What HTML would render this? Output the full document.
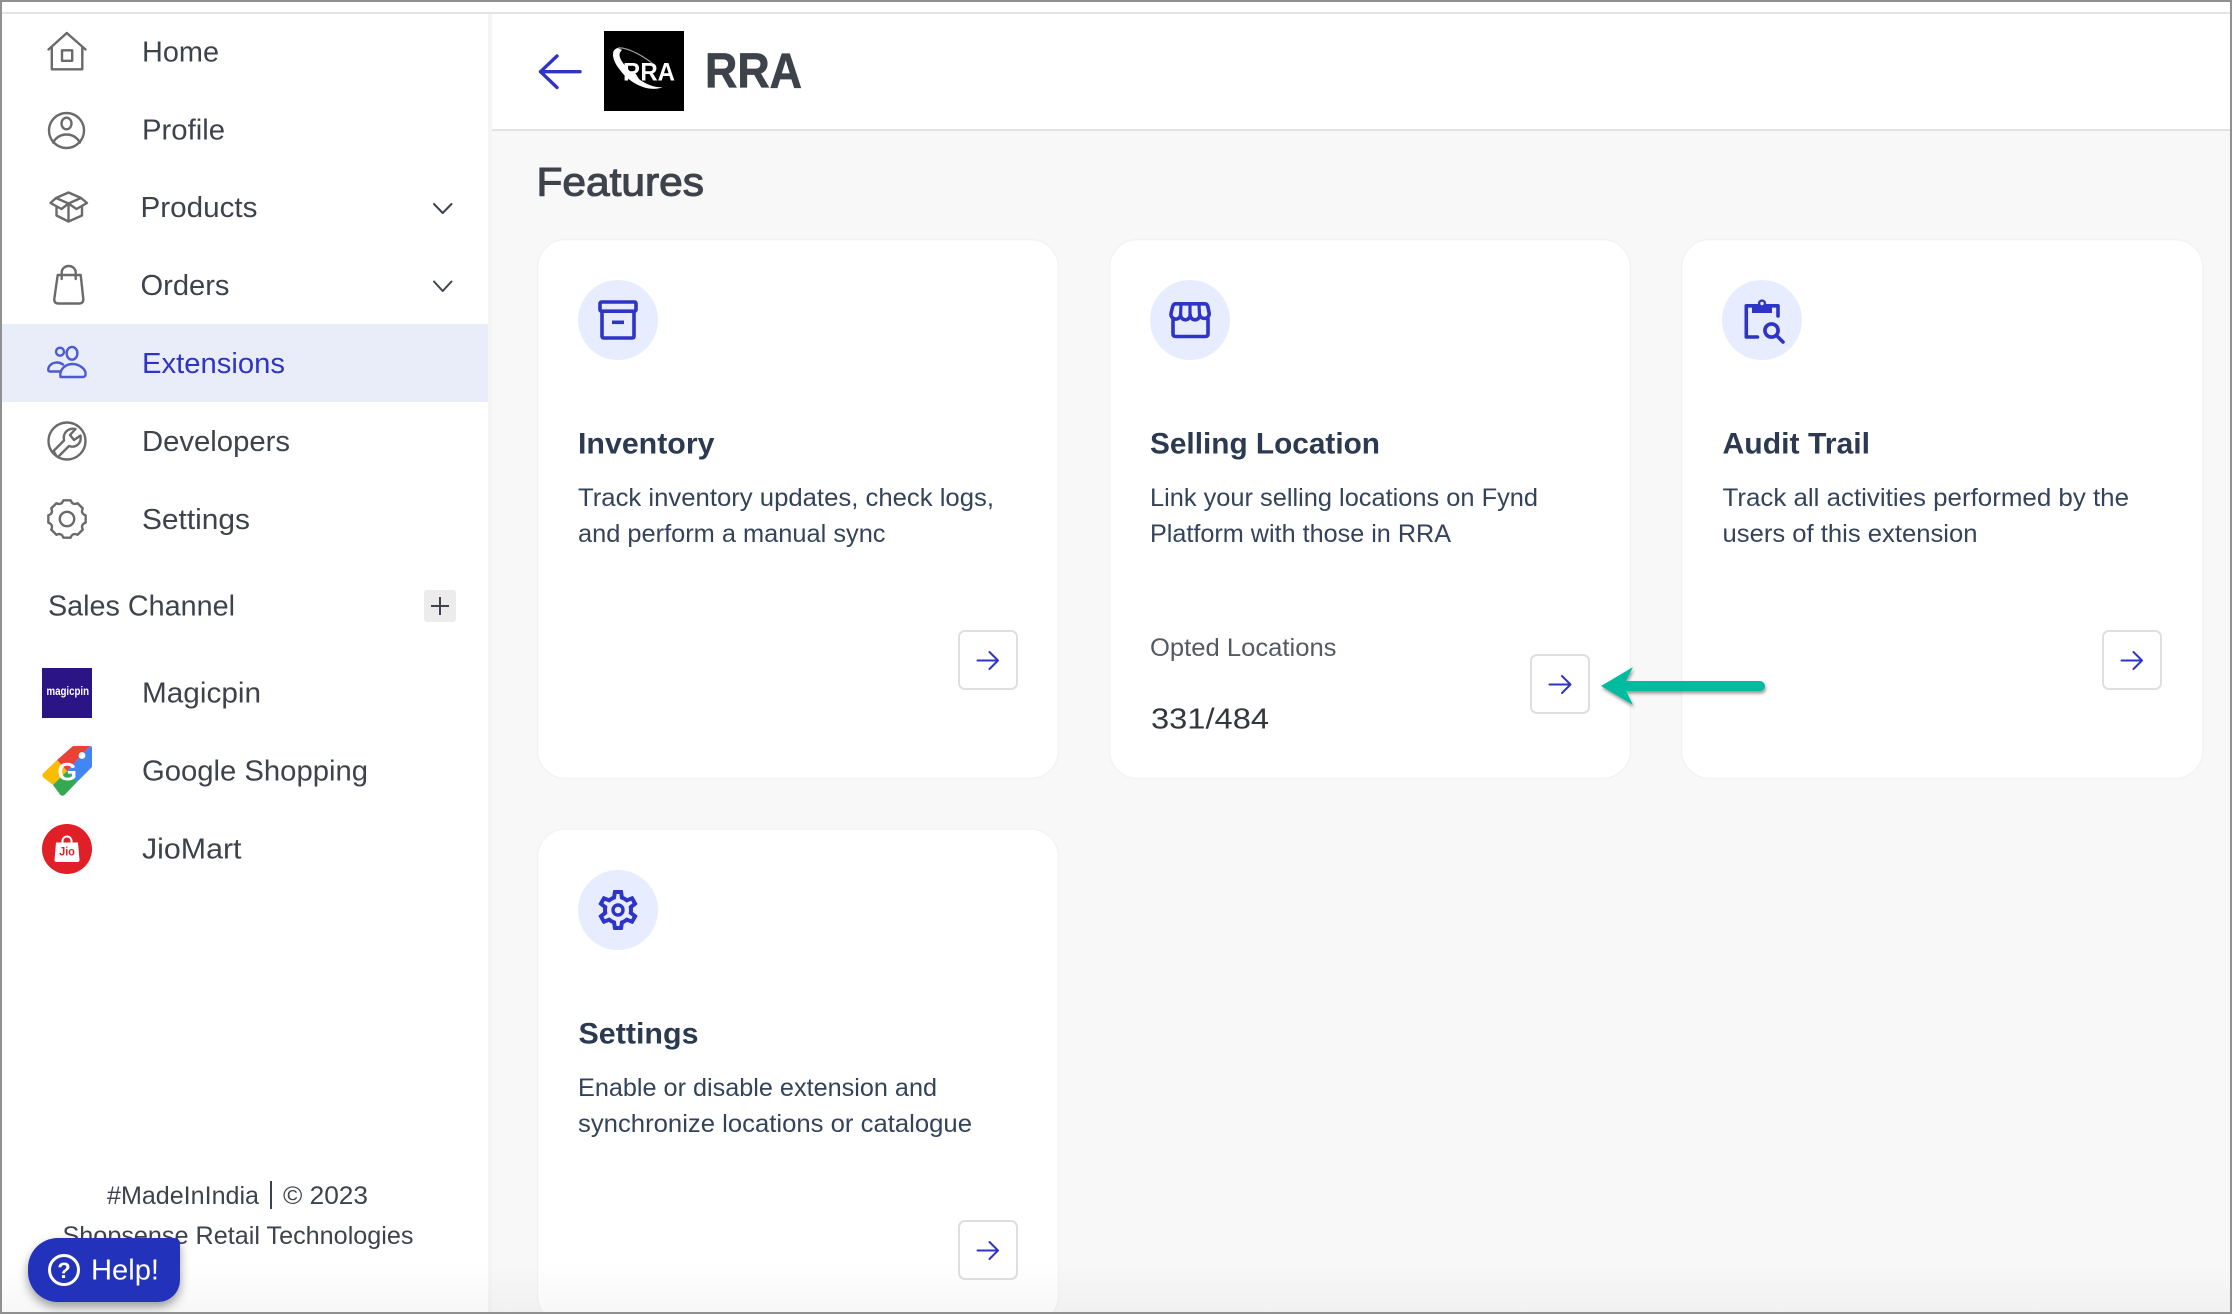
<!DOCTYPE html>
<html lang="en">
<head>
<meta charset="utf-8">
<title>RRA Features</title>
<style>
html,body{margin:0;padding:0;width:2232px;height:1314px;overflow:hidden;background:#fff}
svg{display:block}
text{font-family:"Liberation Sans",sans-serif}
.nav{font-size:29px;fill:#3e424b}
.t{font-size:30px;font-weight:700;fill:#2b3a50}
.d{font-size:25px;fill:#34435a}
.f{font-size:25px;fill:#3e424b}
.ic{fill:none;stroke:#6a6a6a;stroke-width:2.4;stroke-linecap:round;stroke-linejoin:round}
.bl{fill:none;stroke:#2e34c5;stroke-width:3.6;stroke-linecap:round;stroke-linejoin:round}
.card{fill:#fff;stroke:#f3f3f3;stroke-width:1.5}
.btn{fill:#fff;stroke:#dfdfdf;stroke-width:2}
.ar{fill:none;stroke:#2e34c5;stroke-width:2;stroke-linecap:round;stroke-linejoin:round}
.chev{fill:none;stroke:#3e424b;stroke-width:2;stroke-linecap:round;stroke-linejoin:round}
</style>
</head>
<body>
<svg width="2232" height="1314" viewBox="0 0 2232 1314" xmlns="http://www.w3.org/2000/svg">
<defs>
<filter id="sh" x="-30%" y="-30%" width="160%" height="170%"><feDropShadow dx="0" dy="5" stdDeviation="5" flood-color="#000" flood-opacity=".38"/></filter>
<filter id="sa" x="-10%" y="-40%" width="120%" height="190%"><feDropShadow dx="1" dy="2.5" stdDeviation="1.5" flood-color="#000" flood-opacity=".4"/></filter>
<linearGradient id="fade" x1="0" y1="0" x2="0" y2="1"><stop offset="0" stop-color="#000" stop-opacity="0"/><stop offset="1" stop-color="#000" stop-opacity=".03"/></linearGradient>
</defs>

<!-- backgrounds -->
<rect width="2232" height="1314" fill="#fff"/>
<rect x="492" y="131" width="1740" height="1183" fill="#f8f8f8"/>
<rect x="488" y="14" width="4" height="1300" fill="#f5f5f5"/>
<rect x="2" y="12" width="2228" height="2" fill="#e4e4e4"/>
<rect x="492" y="129" width="1740" height="2" fill="#e2e2e2"/>

<!-- sidebar active row -->
<rect x="2" y="324" width="486" height="78" fill="#e9ecf9"/>

<!-- nav icons -->
<g class="ic">
  <path d="M48.5 49.5 L66.8 33 L85.5 49.5 M51.8 47 V69.3 H82.3 V47"/>
  <rect x="62" y="50.3" width="10.2" height="10.5"/>
  <circle cx="66.5" cy="130.5" r="17.5"/>
  <ellipse cx="66.5" cy="123.5" rx="5" ry="5.8"/>
  <path d="M53 142.5 C57 136 62 134.5 66.5 134.5 C71 134.5 76 136 80 142.5"/>
  <path d="M68.5 192.5 L81 198 L68.5 203.5 L56 198 Z M56 198 L50.5 203 L61.5 209 L68.5 203.5 L76.5 209 L87 203 L81 198 M56.5 206.5 V215.5 L68.5 221.5 L82 215.5 V206.5 M68.5 203.5 V221.5"/>
  <path d="M57.7 275 H80.7 L83.3 299 Q83.5 303.5 79 303.5 H58.5 Q54 303.5 54.3 299 Z"/>
  <path d="M61.7 279 V272.5 A7 6.5 0 0 1 75.7 272.5 V279"/>
  <circle cx="67" cy="441" r="18.5"/>
  <path d="M56.5 456 L53.5 451 L64 440.5 C62.5 433 68 427.5 75.5 429 L70 435 L74 440 L80.5 435.5 C82 443 76 448.5 69 446 L59 456"/>
  <path d="M63.4 500.35 L70.6 500.35 Q72.55 505.6 77.6 503.25 L82.75 508.4 Q80.4 513.45 85.65 515.4 V522.6 Q80.4 524.55 82.75 529.6 L77.6 534.75 Q72.55 532.4 70.6 537.65 H63.4 Q61.45 532.4 56.4 534.75 L51.25 529.6 Q53.6 524.55 48.35 522.6 V515.4 Q53.6 513.45 51.25 508.4 L56.4 503.25 Q61.45 505.6 63.4 500.35 Z"/>
  <circle cx="67" cy="519" r="7.2"/>
</g>
<g fill="none" stroke="#4a5bd4" stroke-width="2.4" stroke-linecap="round" stroke-linejoin="round">
  <circle cx="60" cy="351.7" r="4"/>
  <ellipse cx="72" cy="353.3" rx="5.4" ry="6.4"/>
  <path d="M60 371.5 H50 C47.5 371.5 48 368 49.5 366 C52 362.5 58 361 63 364.5"/>
  <path d="M60.5 377 C59 369 66 364 72.5 364 C79 364 86.5 369 85.5 375 Q85 377 83 377 Z"/>
</g>
<g class="chev"><path d="M434 204 L442.7 213 L451.5 204"/><path d="M434 281.5 L442.7 291 L451.5 281.5"/></g>

<!-- nav text -->
<text class="nav" x="142" y="61.5" textLength="77" lengthAdjust="spacingAndGlyphs">Home</text>
<text class="nav" x="142" y="139.5" textLength="83" lengthAdjust="spacingAndGlyphs">Profile</text>
<text class="nav" x="140.5" y="217" textLength="117" lengthAdjust="spacingAndGlyphs">Products</text>
<text class="nav" x="140.5" y="295" textLength="89" lengthAdjust="spacingAndGlyphs">Orders</text>
<text class="nav" x="142" y="373" textLength="143" lengthAdjust="spacingAndGlyphs" style="fill:#2e35c3">Extensions</text>
<text class="nav" x="142" y="451" textLength="148" lengthAdjust="spacingAndGlyphs">Developers</text>
<text class="nav" x="142" y="529" textLength="108" lengthAdjust="spacingAndGlyphs">Settings</text>

<!-- sales channel -->
<text class="nav" x="48" y="615.5" textLength="187" lengthAdjust="spacingAndGlyphs">Sales Channel</text>
<rect x="424" y="590" width="32" height="32" rx="3" fill="#ececec"/>
<path d="M431 606 H449 M440 597 V615" stroke="#3e424b" stroke-width="2" fill="none"/>

<rect x="42" y="668" width="50" height="50" fill="#2b1485"/>
<text x="46.5" y="695" font-size="12" font-weight="700" fill="#fff" textLength="42.5" lengthAdjust="spacingAndGlyphs">magicpin</text>
<text class="nav" x="142" y="702.5" textLength="119" lengthAdjust="spacingAndGlyphs">Magicpin</text>

<path d="M73 746 H90 L67 771 L57 760 Z" fill="#ea4335"/>
<path d="M90 746 Q92 746 92 748 V767 L77 782 L67 771 Z" fill="#4285f4"/>
<path d="M57 760 L67 771 L53 785 L43.5 777.5 Q41 775.5 43.5 773 Z" fill="#fbbc04"/>
<path d="M53 785 L67 771 L77 782 L65 794.5 Q62.5 797 60 794.5 Z" fill="#34a853"/>
<circle cx="82" cy="755.5" r="3.4" fill="#fff"/>
<text x="57.5" y="780.5" font-size="25" font-weight="700" fill="#fff">G</text>
<text class="nav" x="142" y="780.5" textLength="226" lengthAdjust="spacingAndGlyphs">Google Shopping</text>

<circle cx="67" cy="849" r="25" fill="#e01f26"/>
<path d="M56 842.5 H78 L79.5 860 Q79.5 862 77.5 862 H56.5 Q54.5 862 54.5 860 Z" fill="#fff"/>
<path d="M62.5 843 V841 A4.5 4.5 0 0 1 71.5 841 V843" fill="none" stroke="#fff" stroke-width="2"/>
<text x="59.3" y="855.5" font-size="12" font-weight="700" fill="#e01f26" textLength="15.5" lengthAdjust="spacingAndGlyphs">Jio</text>
<text class="nav" x="142" y="858.5" textLength="99.5" lengthAdjust="spacingAndGlyphs">JioMart</text>

<!-- footer -->
<text class="f" x="107" y="1204" textLength="152" lengthAdjust="spacingAndGlyphs">#MadeInIndia</text>
<rect x="270" y="1181" width="2" height="28" fill="#3e424b"/>
<text class="f" x="283" y="1204" textLength="85" lengthAdjust="spacingAndGlyphs">© 2023</text>
<text class="f" x="62.5" y="1244" textLength="351" lengthAdjust="spacingAndGlyphs">Shopsense Retail Technologies</text>

<!-- header -->
<path d="M580 71.7 H540.5 M557 56 L540.5 71.7 L557 87.5" fill="none" stroke="#2e34c5" stroke-width="3.4" stroke-linecap="round" stroke-linejoin="round"/>
<rect x="604" y="31" width="80" height="80" fill="#000"/>
<text x="623" y="80.7" font-size="25" font-weight="700" fill="#fff" textLength="52" lengthAdjust="spacingAndGlyphs">RRA</text>
<path d="M618 48 C611 49 611 59 620 70 C630 84 650 93 663 87 C652 89 637 80 627 68 C620 60 617 54 622 50 Z" fill="#fff"/>
<path d="M618 48 C626 47 640 54 652 63" fill="none" stroke="#9a9a9a" stroke-width="1.2"/>
<text x="705" y="87.5" font-size="49" font-weight="700" fill="#3e424b" stroke="#3e424b" stroke-width=".7" textLength="97" lengthAdjust="spacingAndGlyphs">RRA</text>

<text x="536.5" y="195.5" font-size="40" fill="#3e424b" stroke="#3e424b" stroke-width="1.1" textLength="167.5" lengthAdjust="spacingAndGlyphs">Features</text>

<!-- cards -->
<rect class="card" x="537.5" y="239.5" width="521" height="539" rx="28"/>
<rect class="card" x="1109.5" y="239.5" width="521" height="539" rx="28"/>
<rect class="card" x="1681.5" y="239.5" width="521.5" height="539" rx="28"/>
<rect class="card" x="537.5" y="829" width="521" height="495" rx="28"/>

<!-- icon circles -->
<g fill="#e7edfe">
<circle cx="618" cy="320" r="40"/><circle cx="1190" cy="320" r="40"/><circle cx="1762" cy="320" r="40"/><circle cx="618" cy="910" r="40"/>
</g>

<!-- archive -->
<g class="bl">
  <rect x="600" y="302" width="36" height="9.2" rx="1.5"/>
  <path d="M602 312 V336 Q602 338 604 338 H632 Q634 338 634 336 V312"/>
</g>
<rect x="612" y="320.5" width="12" height="3.6" fill="#2e34c5"/>

<!-- store -->
<g class="bl">
  <path d="M1175.5 303.8 H1205 C1206.5 303.8 1207.3 304.8 1207.8 306.5 L1209.2 313.5 A4.8 4.8 0 0 1 1199.8 315 A4.8 4.8 0 0 1 1190.2 315 A4.8 4.8 0 0 1 1180.6 315 A4.8 4.8 0 0 1 1171 313.5 L1172.7 306.5 C1173.2 304.8 1174 303.8 1175.5 303.8 Z"/>
  <path d="M1173 319 V334 Q1173 336.5 1176 336.5 H1205 Q1208 336.5 1208 334 V319"/>
</g>
<path d="M1181 304 L1180.5 315 M1190 304 V315 M1199 304 L1199.5 315" stroke="#2e34c5" stroke-width="3.2" fill="none"/>

<!-- audit -->
<g class="bl">
  <path d="M1752 305.8 H1746.3 V337 H1757.5 M1772 305.8 H1778 V316"/>
  <circle cx="1771.5" cy="330.5" r="6.6"/>
  <path d="M1776.5 335.5 L1783 342"/>
</g>
<path d="M1752 304 H1758 A4.05 4.05 0 1 1 1766 304 H1772 V313 H1752 Z" fill="#2e34c5"/>
<circle cx="1762" cy="303.5" r="1.7" fill="#e7edfe"/>

<!-- gear -->
<path transform="translate(594 886) scale(2)" fill="#2e34c5" d="M19.43 12.98c.04-.32.07-.64.07-.98 0-.34-.03-.66-.07-.98l2.11-1.65c.19-.15.24-.42.12-.64l-2-3.46c-.09-.16-.26-.25-.44-.25-.06 0-.12.01-.17.03l-2.49 1c-.52-.4-1.08-.73-1.69-.98l-.38-2.65C14.46 2.18 14.25 2 14 2h-4c-.25 0-.46.18-.49.42l-.38 2.65c-.61.25-1.17.59-1.69.98l-2.49-1c-.06-.02-.12-.03-.18-.03-.17 0-.34.09-.43.25l-2 3.46c-.13.22-.07.49.12.64l2.11 1.65c-.04.32-.07.65-.07.98 0 .33.03.66.07.98l-2.11 1.65c-.19.15-.24.42-.12.64l2 3.46c.09.16.26.25.44.25.06 0 .12-.01.17-.03l2.49-1c.52.4 1.08.73 1.69.98l.38 2.65c.03.24.24.42.49.42h4c.25 0 .46-.18.49-.42l.38-2.65c.61-.25 1.17-.59 1.69-.98l2.49 1c.06.02.12.03.18.03.17 0 .34-.09.43-.25l2-3.46c.12-.22.07-.49-.12-.64l-2.11-1.65zm-1.98-1.71c.04.31.05.52.05.73 0 .21-.02.43-.05.73l-.14 1.13.89.7 1.08.84-.7 1.21-1.27-.51-1.04-.42-.9.68c-.43.32-.84.56-1.25.73l-1.06.43-.16 1.13-.2 1.35h-1.4l-.19-1.35-.16-1.13-1.06-.43c-.43-.18-.83-.41-1.23-.71l-.91-.7-1.06.43-1.27.51-.7-1.21 1.08-.84.89-.7-.14-1.13c-.03-.31-.05-.54-.05-.74s.02-.43.05-.73l.14-1.13-.89-.7-1.08-.84.7-1.21 1.27.51 1.04.42.9-.68c.43-.32.84-.56 1.25-.73l1.06-.43.16-1.13.2-1.35h1.39l.19 1.35.16 1.13 1.06.43c.43.18.83.41 1.23.71l.91.7 1.06-.43 1.27-.51.7 1.21-1.07.85-.89.7.14 1.13z"/>
<circle cx="618" cy="910" r="5" fill="none" stroke="#2e34c5" stroke-width="3.4"/>

<!-- card text -->
<text class="t" x="578" y="453.5" textLength="136.5" lengthAdjust="spacingAndGlyphs">Inventory</text>
<text class="d" x="578" y="506" textLength="416" lengthAdjust="spacingAndGlyphs">Track inventory updates, check logs,</text>
<text class="d" x="578" y="542" textLength="307.5" lengthAdjust="spacingAndGlyphs">and perform a manual sync</text>

<text class="t" x="1150" y="453.5" textLength="230" lengthAdjust="spacingAndGlyphs">Selling Location</text>
<text class="d" x="1150" y="506" textLength="388" lengthAdjust="spacingAndGlyphs">Link your selling locations on Fynd</text>
<text class="d" x="1150" y="542" textLength="301" lengthAdjust="spacingAndGlyphs">Platform with those in RRA</text>
<text x="1150" y="656" font-size="25" fill="#555a60" textLength="186.5" lengthAdjust="spacingAndGlyphs">Opted Locations</text>
<text x="1151" y="728.5" font-size="29" fill="#33373d" textLength="118" lengthAdjust="spacingAndGlyphs">331/484</text>

<text class="t" x="1722.5" y="453.5" textLength="147.5" lengthAdjust="spacingAndGlyphs">Audit Trail</text>
<text class="d" x="1722.5" y="506" textLength="406.5" lengthAdjust="spacingAndGlyphs">Track all activities performed by the</text>
<text class="d" x="1722.5" y="542" textLength="255" lengthAdjust="spacingAndGlyphs">users of this extension</text>

<text class="t" x="578.5" y="1043.5" textLength="120" lengthAdjust="spacingAndGlyphs">Settings</text>
<text class="d" x="578" y="1096" textLength="359" lengthAdjust="spacingAndGlyphs">Enable or disable extension and</text>
<text class="d" x="578" y="1132" textLength="394" lengthAdjust="spacingAndGlyphs">synchronize locations or catalogue</text>

<!-- arrow buttons -->
<rect class="btn" x="959" y="631" width="58" height="58" rx="6"/>
<path class="ar" d="M977.5 660.5 H998 M989.5 652 L998 660.5 L989.5 669"/>
<rect class="btn" x="1531" y="655" width="58" height="58" rx="6"/>
<path class="ar" d="M1549.5 684.5 H1570.5 M1562 676 L1570.5 684.5 L1562 693"/>
<rect class="btn" x="2103" y="631" width="58" height="58" rx="6"/>
<path class="ar" d="M2121.5 660.5 H2142 M2133.5 652 L2142 660.5 L2133.5 669"/>
<rect class="btn" x="959" y="1221" width="58" height="58" rx="6"/>
<path class="ar" d="M977.5 1250.5 H998 M989.5 1242 L998 1250.5 L989.5 1259"/>

<!-- green annotation arrow -->
<path filter="url(#sa)" fill="#00bc9e" d="M1601 686 L1633 667 L1626 681 H1760 A5 5 0 0 1 1760 691 H1626 L1633 705 Z"/>

<!-- bottom fade -->
<rect x="2" y="1262" width="2228" height="50" fill="url(#fade)"/>

<!-- help button -->
<path filter="url(#sh)" fill="#2230bb" d="M58 1238 H174 Q180 1238 180 1244 V1280 A22 22 0 0 1 158 1302 H58 A30 30 0 0 1 28 1272 V1268 A30 30 0 0 1 58 1238 Z"/>
<circle cx="64" cy="1270" r="14.5" fill="none" stroke="#fff" stroke-width="3"/>
<text x="64" y="1278" font-size="22" font-weight="700" fill="#fff" text-anchor="middle">?</text>
<text x="91" y="1279.5" font-size="29" fill="#fff" textLength="68" lengthAdjust="spacingAndGlyphs">Help!</text>

<!-- outer frame -->
<rect x="0" y="0" width="2232" height="2" fill="#909090"/>
<rect x="0" y="0" width="2" height="1314" fill="#909090"/>
<rect x="2230" y="0" width="2" height="1314" fill="#909090"/>
<rect x="0" y="1312" width="2232" height="2" fill="#909090"/>
</svg>
</body>
</html>
